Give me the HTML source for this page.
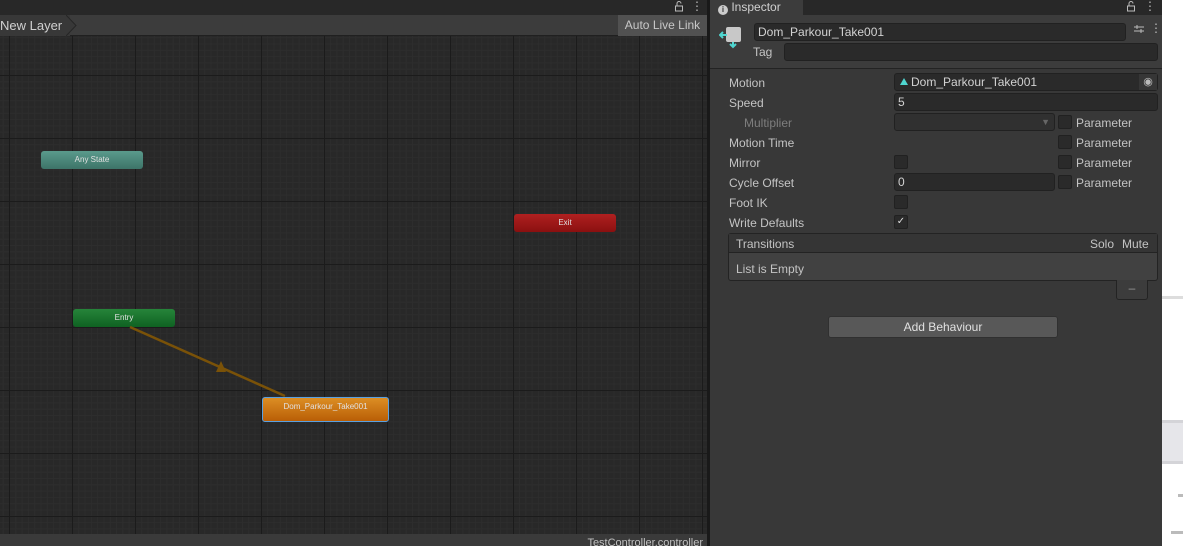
<!DOCTYPE html>
<html><head><style>
*{margin:0;padding:0;box-sizing:border-box}
body{width:1183px;height:546px;overflow:hidden;background:#fff;font-family:"Liberation Sans",sans-serif;position:relative;font-size:12px;color:#c4c4c4}
.abs{position:absolute}
#graph{left:0;top:36px;width:707px;height:498px;background-color:#282828;
background-image:
linear-gradient(#1b1b1b 1px,transparent 1px),
linear-gradient(90deg,#1b1b1b 1px,transparent 1px),
linear-gradient(#2d2d2d 1px,transparent 1px),
linear-gradient(90deg,#2d2d2d 1px,transparent 1px);
background-size:63px 63px,63px 63px,6.3px 6.3px,6.3px 6.3px;
background-position:0 39px,9px 0,0 39px,9px 0}
.node{position:absolute;height:18px;border-radius:3px;font-size:8px;color:#e0e0e0;text-align:center;line-height:17px}
.lbl{position:absolute;left:729px;font-size:12px;color:#c4c4c4}
.fld{position:absolute;background:#2a2a2a;border:1px solid #212121;border-radius:3px;height:18px;font-size:12px;color:#d2d2d2;padding-left:3px;line-height:16px}
.cb{position:absolute;width:14px;height:14px;background:#2a2a2a;border:1px solid #212121;border-radius:2px}
.pl{position:absolute;left:1076px;font-size:12px;color:#c4c4c4}
</style></head><body>
<div class="abs" style="left:0;top:0;width:710px;height:15px;background:#282828"></div>
<div class="abs" style="left:0;top:15px;width:707px;height:21px;background:#3c3c3c;border-bottom:1px solid #202020"></div>
<div class="abs" style="left:0;top:15px;width:70px;height:21px;background:#383838;font-size:13px;line-height:21px;color:#d0d0d0">New Layer</div>
<svg class="abs" style="left:66px;top:15px" width="12" height="21"><path d="M0 0 L10 10.5 L0 21" fill="#383838" stroke="#262626"/></svg>
<div class="abs" style="left:618px;top:15px;width:89px;height:21px;background:#515151;font-size:12px;line-height:21px;text-align:center;color:#c8c8c8">Auto Live Link</div>
<svg class="abs" style="left:674px;top:1px" width="10" height="11"><path d="M3 5 V2.5 A2 2 0 0 1 7 2.5" stroke="#bbb" fill="none"/><rect x="1.5" y="5" width="7" height="5" stroke="#bbb" fill="none"/></svg>
<div class="abs" style="left:691px;top:-1px;font-size:12px;color:#bbb">&#x22EE;</div>
<div id="graph" class="abs"></div>
<div class="abs" style="left:0;top:534px;width:707px;height:12px;background:#3a3a3a;font-size:11px;line-height:18px;text-align:right;padding-right:4px;color:#c0c0c0;overflow:hidden">TestController.controller</div>
<div class="abs" style="left:707px;top:0;width:3px;height:546px;background:#191919"></div>
<div class="node" style="left:41px;top:151px;width:102px;background:linear-gradient(#5a9a8c,#3d7468)">Any State</div>
<div class="node" style="left:514px;top:214px;width:102px;background:linear-gradient(#b02020,#8a1010)">Exit</div>
<div class="node" style="left:73px;top:309px;width:102px;background:linear-gradient(#26843a,#0f6222)">Entry</div>
<svg class="abs" style="left:0;top:0" width="707" height="546"><line x1="130" y1="327" x2="285" y2="396" stroke="#7a5208" stroke-width="2.5"/><polygon points="216,372 221,361 226,372" fill="#7a5208"/></svg>
<div class="node" style="left:262px;top:397px;width:127px;height:25px;line-height:18px;background:linear-gradient(#dc8e24,#b95e06);border:1px solid #5aa0e0">Dom_Parkour_Take001</div>

<div class="abs" style="left:710px;top:0;width:452px;height:546px;background:#383838"></div>
<div class="abs" style="left:710px;top:0;width:452px;height:15px;background:#282828"></div>
<div class="abs" style="left:710px;top:0;width:93px;height:15px;background:#3c3c3c;font-size:12px;line-height:14px;padding-left:8px;color:#d0d0d0"><span style="display:inline-block;width:10px;height:10px;border-radius:50%;background:#ccc;color:#3c3c3c;font-size:8px;line-height:10px;text-align:center;font-weight:bold;vertical-align:-1px">i</span> Inspector</div>
<svg class="abs" style="left:1126px;top:1px" width="10" height="11"><path d="M3 5 V2.5 A2 2 0 0 1 7 2.5" stroke="#bbb" fill="none"/><rect x="1.5" y="5" width="7" height="5" stroke="#bbb" fill="none"/></svg>
<div class="abs" style="left:1144px;top:-1px;font-size:12px;color:#bbb">&#x22EE;</div>
<div class="abs" style="left:710px;top:15px;width:452px;height:54px;background:#3c3c3c;border-bottom:1px solid #232323"></div>
<svg class="abs" style="left:719px;top:25px" width="26" height="24"><rect x="7" y="2" width="15" height="15" rx="2" fill="#c8c8c8"/><path d="M1 10 L8 10 M4 7 L1 10 L4 13" stroke="#4fd6d0" stroke-width="2" fill="none"/><path d="M14 17 L14 22 M11 19 L14 22 L17 19" stroke="#4fd6d0" stroke-width="2" fill="none"/></svg>
<div class="fld" style="left:754px;top:23px;width:372px">Dom_Parkour_Take001</div>
<svg class="abs" style="left:1133px;top:23px" width="12" height="12"><path d="M1 4 H11 M1 8 H11 M4 2 V6 M8 6 V10" stroke="#bbb" fill="none"/></svg>
<div class="abs" style="left:1150px;top:21px;font-size:12px;color:#bbb">&#x22EE;</div>
<div class="abs" style="left:753px;top:45px;font-size:12px;color:#c4c4c4">Tag</div>
<div class="fld" style="left:784px;top:43px;width:374px"></div>

<div class="lbl" style="top:76px">Motion</div>
<div class="fld" style="left:894px;top:73px;width:264px;padding-left:16px">Dom_Parkour_Take001</div>
<div class="abs" style="left:900px;top:78px;width:0;height:0;border-left:4px solid transparent;border-right:4px solid transparent;border-bottom:7px solid #4fd6d0"></div>
<div class="abs" style="left:1139px;top:74px;width:18px;height:16px;background:#363636;color:#bbb;font-size:11px;text-align:center;line-height:16px">&#x25C9;</div>
<div class="lbl" style="top:96px">Speed</div>
<div class="fld" style="left:894px;top:93px;width:264px">5</div>
<div class="lbl" style="top:116px;left:744px;color:#7e7e7e">Multiplier</div>
<div class="fld" style="left:894px;top:113px;width:161px;background:#303030"><span style="position:absolute;right:4px;top:0;color:#666;font-size:9px">&#x25BC;</span></div>
<div class="cb" style="left:1058px;top:115px"></div><div class="pl" style="top:116px">Parameter</div>
<div class="lbl" style="top:136px">Motion Time</div>
<div class="cb" style="left:1058px;top:135px"></div><div class="pl" style="top:136px">Parameter</div>
<div class="lbl" style="top:156px">Mirror</div>
<div class="cb" style="left:894px;top:155px"></div>
<div class="cb" style="left:1058px;top:155px"></div><div class="pl" style="top:156px">Parameter</div>
<div class="lbl" style="top:176px">Cycle Offset</div>
<div class="fld" style="left:894px;top:173px;width:161px">0</div>
<div class="cb" style="left:1058px;top:175px"></div><div class="pl" style="top:176px">Parameter</div>
<div class="lbl" style="top:196px">Foot IK</div>
<div class="cb" style="left:894px;top:195px"></div>
<div class="lbl" style="top:216px">Write Defaults</div>
<div class="cb" style="left:894px;top:215px;color:#ddd;font-size:10px;line-height:12px;text-align:center">&#x2713;</div>

<div class="abs" style="left:728px;top:233px;width:430px;height:48px;border:1px solid #232323;border-radius:3px;background:#414141"></div>
<div class="abs" style="left:729px;top:234px;width:428px;height:19px;background:#353535;border-bottom:1px solid #232323"></div>
<div class="abs" style="left:736px;top:237px">Transitions</div>
<div class="abs" style="left:1090px;top:237px">Solo</div>
<div class="abs" style="left:1122px;top:237px">Mute</div>
<div class="abs" style="left:736px;top:262px">List is Empty</div>
<div class="abs" style="left:1116px;top:280px;width:32px;height:20px;background:#3c3c3c;border:1px solid #232323;border-top:none;border-radius:0 0 3px 3px;text-align:center;color:#999;line-height:16px">&#x2013;</div>
<div class="abs" style="left:828px;top:316px;width:230px;height:22px;background:#585858;border:1px solid #303030;border-radius:3px;text-align:center;line-height:20px;color:#e0e0e0">Add Behaviour</div>

<div class="abs" style="left:1162px;top:0;width:21px;height:546px;background:#fff"></div>
<div class="abs" style="left:1162px;top:420px;width:21px;height:44px;background:#e6e6ea;border-top:3px solid #d4d4d8;border-bottom:3px solid #d4d4d8"></div>
<div class="abs" style="left:1162px;top:296px;width:21px;height:3px;background:#ddd"></div>
<div class="abs" style="left:1178px;top:494px;width:5px;height:3px;background:#bbb"></div>
<div class="abs" style="left:1171px;top:531px;width:12px;height:3px;background:#bbb"></div>
</body></html>
